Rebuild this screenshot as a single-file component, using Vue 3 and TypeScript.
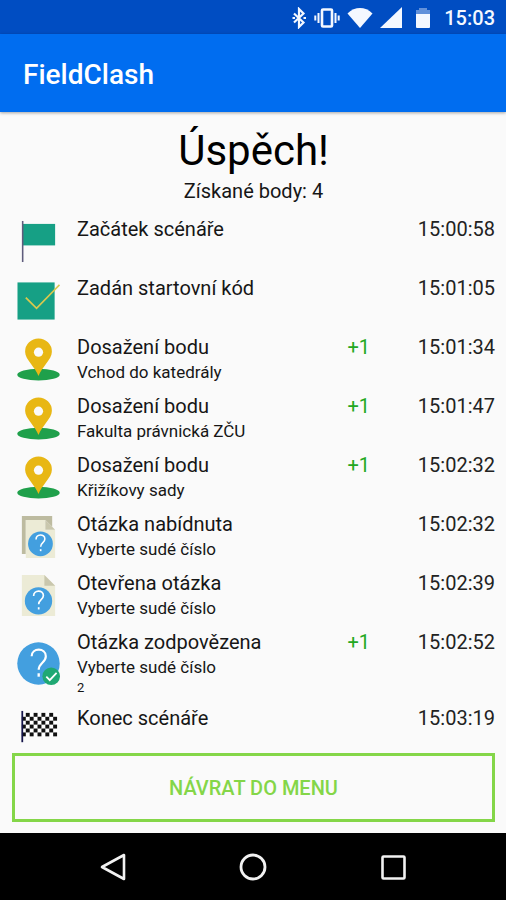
<script setup lang="ts">
type IconKind = 'flag' | 'code' | 'pin' | 'offered' | 'opened' | 'answered' | 'finish'

interface LogEntry {
  icon: IconKind
  title: string
  time: string
  points?: string
  detail?: string
  answer?: string
}

const entries: LogEntry[] = [
  { icon: 'flag', title: 'Začátek scénáře', time: '15:00:58' },
  { icon: 'code', title: 'Zadán startovní kód', time: '15:01:05' },
  { icon: 'pin', title: 'Dosažení bodu', detail: 'Vchod do katedrály', points: '+1', time: '15:01:34' },
  { icon: 'pin', title: 'Dosažení bodu', detail: 'Fakulta právnická ZČU', points: '+1', time: '15:01:47' },
  { icon: 'pin', title: 'Dosažení bodu', detail: 'Křižíkovy sady', points: '+1', time: '15:02:32' },
  { icon: 'offered', title: 'Otázka nabídnuta', detail: 'Vyberte sudé číslo', time: '15:02:32' },
  { icon: 'opened', title: 'Otevřena otázka', detail: 'Vyberte sudé číslo', time: '15:02:39' },
  { icon: 'answered', title: 'Otázka zodpovězena', detail: 'Vyberte sudé číslo', answer: '2', points: '+1', time: '15:02:52' },
  { icon: 'finish', title: 'Konec scénáře', time: '15:03:19' },
]

// Dark squares of the finish flag: 9 columns by 6 rows
const squares: { x: number; y: number }[] = []
for (let row = 0; row < 6; row++) {
  for (let col = 0; col < 9; col++) {
    if ((row + col) % 2 === 1) squares.push({ x: 5 + col * 4, y: 5 + row * 4 })
  }
}
</script>

<template>
  <div class="screen">
    <div class="status">
      <svg class="status-icon" width="16" height="22" viewBox="0 0 16 22" aria-hidden="true">
        <path d="M3 6.500l9.500 9L8 20V2l4.500 4.500-9.500 9" fill="none" stroke="currentColor" stroke-width="2.200" />
        <path d="M1.500 11h2.500M12.500 11h2.500" stroke="currentColor" stroke-width="2.200" />
      </svg>
      <svg class="status-icon" width="26" height="22" viewBox="0 0 26 22" aria-hidden="true">
        <rect x="8" y="2.5" width="10" height="17" rx="1" fill="none" stroke="currentColor" stroke-width="2.6" />
        <path d="M4.5 6v10M21.500 6v10M1.300 8.500v5M24.700 8.500v5" stroke="currentColor" stroke-width="2" />
      </svg>
      <svg class="status-icon" width="26" height="22" viewBox="0 0 26 22" aria-hidden="true">
        <path d="M0.500 6.500C8-0.800 18-0.800 25.500 6.500L13 21z" fill="currentColor" />
      </svg>
      <svg class="status-icon" width="22" height="22" viewBox="0 0 22 22" aria-hidden="true">
        <path d="M22 0v21H0z" fill="currentColor" />
      </svg>
      <svg class="status-icon battery" width="16" height="22" viewBox="0 0 16 22" aria-hidden="true">
        <path d="M4 1h8v2h3v4H1V3h3z" fill="currentColor" opacity="0.4" />
        <path d="M1 7h14v13q0 1-1 1H2q-1 0-1-1z" fill="currentColor" />
      </svg>
      <span class="clock">15:03</span>
    </div>

    <header class="appbar">
      <span class="app-name">FieldClash</span>
    </header>

    <main class="content">
      <h1 class="headline">Úspěch!</h1>
      <p class="score">Získané body: 4</p>

      <ul class="log">
        <li v-for="entry in entries" :key="entry.title + entry.time" class="entry">
          <svg class="icon" viewBox="0 0 44 44" aria-hidden="true">
            <g v-if="entry.icon === 'flag'">
              <rect x="6" y="4" width="33" height="22" fill="#16a085" />
              <rect x="5" y="1" width="1.600" height="42" fill="#5e5c7c" />
            </g>
            <g v-else-if="entry.icon === 'code'">
              <rect x="0.500" y="3.500" width="38" height="38" fill="#16a085" />
              <path d="M9 19l11 11L43.500 6" fill="none" stroke="#d9c84e" stroke-width="1.800" />
            </g>
            <g v-else-if="entry.icon === 'pin'">
              <ellipse cx="22" cy="37.500" rx="21.700" ry="6" fill="#1fa04b" />
              <path d="M22 39C19 30 8.300 22 8.300 14a13.700 13.500 0 0 1 27.400 0C35.700 22 25 30 22 39z" fill="#e8b714" />
              <circle cx="22" cy="14.500" r="4.700" fill="#fafafa" />
            </g>
            <g v-else-if="entry.icon === 'offered'">
              <path d="M5 1h31v4H9v35H5z" fill="#bdbba0" />
              <path d="M9 5h20v10h10v29H9z" fill="#ecebd6" />
              <path d="M29 5v10h10z" fill="#c9c7ad" />
              <path d="M29 5h7v7z" fill="#bdbba0" />
              <circle cx="24" cy="29.500" r="12.700" fill="#439fdf" />
              <path d="M19.500 25c0-6 9-6 9-.5 0 4-4.300 3.500-4.300 8" fill="none" stroke="#fff" stroke-width="1.600" />
              <path d="M24.200 35v2" stroke="#fff" stroke-width="1.700" />
            </g>
            <g v-else-if="entry.icon === 'opened'">
              <path d="M5 1h23l11 11v31H5z" fill="#ecebd6" />
              <path d="M28 1v11h11z" fill="#c9c7ad" />
              <circle cx="22" cy="27.500" r="14" fill="#439fdf" />
              <path d="M17 22.500c0-6.500 10-6.500 10-.5 0 4.500-4.800 4-4.800 9" fill="none" stroke="#fff" stroke-width="1.700" />
              <path d="M22.200 34v2.300" stroke="#fff" stroke-width="1.800" />
            </g>
            <g v-else-if="entry.icon === 'answered'">
              <circle cx="22" cy="22" r="21.700" fill="#439fdf" />
              <path d="M15 14.500c0-9 14.500-9 14.500 0 0 7-7.300 6.500-7.300 14" fill="none" stroke="#fff" stroke-width="2.200" />
              <path d="M22.200 32v3.500" stroke="#fff" stroke-width="2.400" />
              <circle cx="35" cy="35" r="9" fill="#1fa873" />
              <path d="M30 35.500l3.500 3.500 7-7.500" fill="none" stroke="#fff" stroke-width="1.800" />
            </g>
            <g v-else>
              <rect x="5" y="5" width="36" height="24" fill="#fff" />
              <rect v-for="s in squares" :key="s.x + '-' + s.y" :x="s.x" :y="s.y" width="4" height="4" fill="#111" />
              <rect x="4.500" y="3" width="1.800" height="32" fill="#15154a" />
            </g>
          </svg>
          <div class="text">
            <span class="title">{{ entry.title }}</span>
            <span v-if="entry.detail" class="detail">{{ entry.detail }}</span>
            <span v-if="entry.answer" class="answer">{{ entry.answer }}</span>
          </div>
          <span v-if="entry.points" class="points">{{ entry.points }}</span>
          <time class="time">{{ entry.time }}</time>
        </li>
      </ul>

      <button type="button" class="menu-button">NÁVRAT DO MENU</button>
    </main>

    <nav class="navbar">
      <button type="button" class="nav-button" aria-label="Zpět">
        <svg width="28" height="28" viewBox="0 0 28 28">
          <path d="M25 2v24L3 14z" fill="none" stroke="#f2f2f2" stroke-width="2.600" stroke-linejoin="round" />
        </svg>
      </button>
      <button type="button" class="nav-button" aria-label="Domů">
        <svg width="28" height="28" viewBox="0 0 28 28">
          <circle cx="14" cy="14" r="12" fill="none" stroke="#f2f2f2" stroke-width="2.800" />
        </svg>
      </button>
      <button type="button" class="nav-button" aria-label="Přehled">
        <svg width="28" height="28" viewBox="0 0 28 28">
          <rect x="3.500" y="3.500" width="22" height="22" rx="1" fill="none" stroke="#f2f2f2" stroke-width="2.600" />
        </svg>
      </button>
    </nav>
  </div>
</template>

<style>
body {
  margin: 0;
  background: #fafafa;
}
</style>

<style scoped>
.screen {
  display: flex;
  flex-direction: column;
  min-height: 100vh;
  background: #fafafa;
  color: #161616;
  font-family: Roboto, "Liberation Sans", sans-serif;
}

.status {
  display: flex;
  align-items: center;
  justify-content: flex-end;
  gap: 7px;
  box-sizing: border-box;
  height: 34px;
  padding: 2px 11px 0 0;
  background: #004dc2;
  color: #f4f8ff;
}

.status-icon {
  flex: none;
}

.battery {
  margin-left: 6px;
}

.clock {
  margin-left: 6px;
  font-size: 20px;
  font-weight: 500;
  line-height: 24px;
}

.appbar {
  display: flex;
  align-items: center;
  box-sizing: border-box;
  height: 78px;
  padding: 4px 23px 0;
  background: #006df0;
  box-shadow: 0 1px 3px rgba(0, 0, 0, 0.35);
  color: #fff;
}

.app-name {
  font-size: 28px;
  font-weight: 500;
  line-height: 32px;
}

.content {
  display: flex;
  flex: 1;
  flex-direction: column;
  padding: 12px 11px 11px 12px;
}

.headline {
  margin: 0;
  color: #000;
  font-size: 42px;
  font-weight: 400;
  line-height: 54px;
  text-align: center;
}

.score {
  margin: 0;
  font-size: 20px;
  line-height: 26px;
  text-align: center;
}

.log {
  flex: 1;
  margin: 12px 0 0;
  padding: 0 0 0 5px;
  list-style: none;
}

.entry {
  display: flex;
  align-items: flex-start;
  box-sizing: border-box;
  min-height: 59px;
  padding-bottom: 8px;
}

.entry:last-child {
  min-height: 48px;
  padding-bottom: 0;
}

.icon {
  flex: none;
  align-self: center;
  width: 43px;
  height: 43px;
  margin-right: 17px;
}

.text {
  display: flex;
  flex: 1;
  flex-direction: column;
}

.title,
.points,
.time {
  font-size: 20px;
  line-height: 26px;
}

.detail {
  font-size: 17px;
  line-height: 24px;
}

.answer {
  font-size: 13px;
  line-height: 18px;
}

.points {
  color: #22a822;
}

.time {
  width: 125px;
  color: #222;
  text-align: right;
}

.menu-button {
  height: 69px;
  border: 3px solid #84d648;
  background: transparent;
  color: #84d648;
  font-family: inherit;
  font-size: 20px;
  font-weight: 500;
}

.navbar {
  display: flex;
  justify-content: center;
  gap: 84px;
  height: 67px;
  background: #000;
}

.nav-button {
  display: flex;
  align-items: center;
  justify-content: center;
  width: 56px;
  padding: 0;
  border: 0;
  background: transparent;
}
</style>
